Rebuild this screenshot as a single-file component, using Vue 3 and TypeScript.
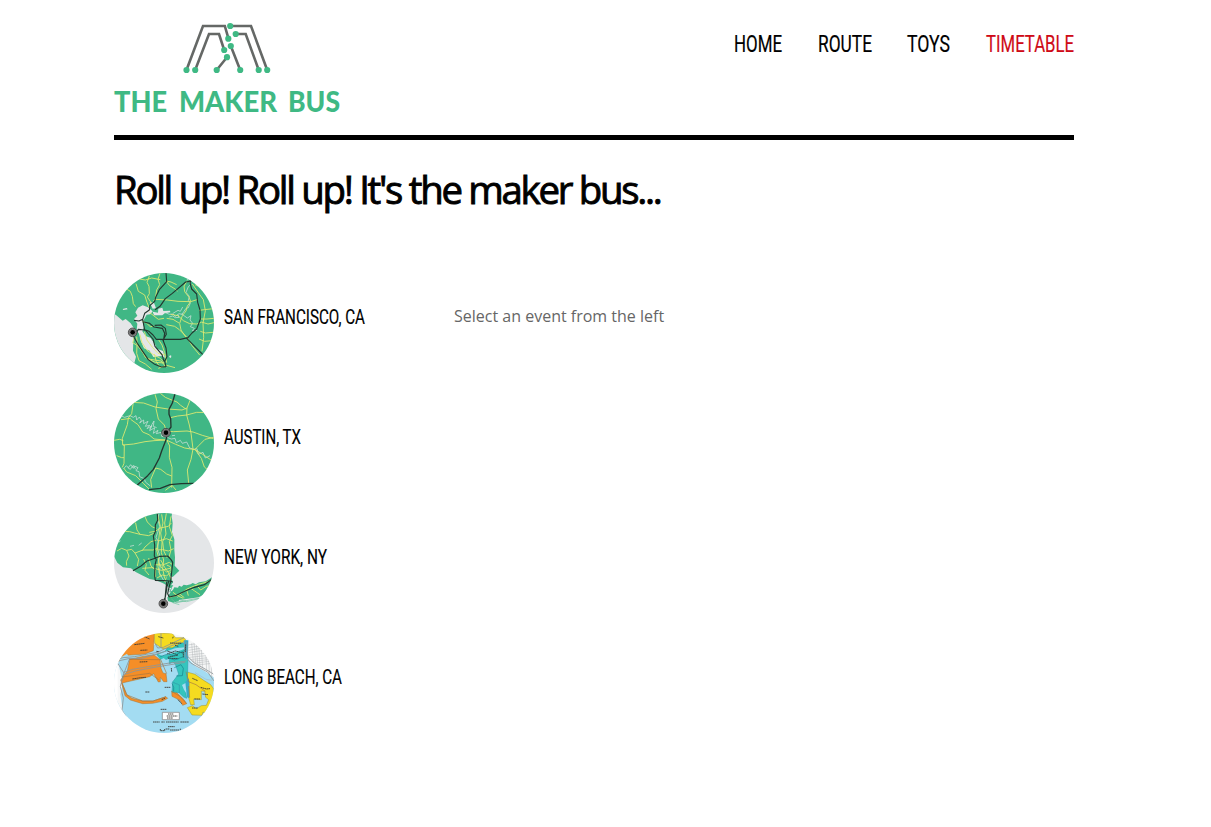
<script setup lang="ts">
interface Shape { c: string; d: string }
interface Label { text: string; width: number; gap?: number; active?: boolean }
interface Stop { id: string; label: Label; shapes: Shape[]; pin?: [number, number] }

const nav: Label[] = [
  { text: 'HOME', width: 48, gap: 36 },
  { text: 'ROUTE', width: 54, gap: 35 },
  { text: 'TOYS', width: 43, gap: 36 },
  { text: 'TIMETABLE', width: 88, active: true },
]

const dots = [
  [126.2, 16], [124.3, 28.7], [131.7, 24], [126.8, 36], [120.2, 40], [123, 47.2],
  [82.5, 60], [91.2, 60], [112.7, 60], [136.2, 60], [154.7, 60], [163.2, 60],
]

const stops: Stop[] = [
  {
    id: 'sf', label: { text: 'SAN FRANCISCO, CA', width: 141 }, pin: [68, 193],
    shapes: [
      { c: 'land', d: 'M0 0H324V330H0Z' },
      { c: 'water', d: 'M0 132L18 141L38 158L47 153L62 166L72 181L70 216L69 248L78 266L73 285L82 305L96 325H0Z' },
      { c: 'water', d: 'M72 153L82 143L76 133L84 119L98 112L114 118L128 130L121 139L110 140L104 151L98 163L102 178L97 190L108 205L121 209L137 232L140 242L159 249L165 269L154 264L130 267L119 248L102 241L92 218L87 197L80 187L82 167Z' },
      { c: 'water', d: 'M119 103L132 104L138 121L128 122ZM128 131L144 134L145 122L157 119L160 129L180 128L181 133L164 136L157 142L132 142ZM38 123L50 120L53 124L40 126ZM180 262L184 263L183 270L177 267Z' },
      { c: 'thinwater', d: 'M164 133L178 139L189 138L196 145L207 137L216 139L228 121L235 119L241 105L235 98L238 85L228 73L235 56L242 50L238 40L246 30M204 140L207 148L196 149L188 144L178 147M215 138L232 150L243 143L240 156L248 166L241 176L253 181L247 188L261 187M189 136L204 127L211 130L218 117M230 36L244 28L248 39' },
      { c: 'road', d: 'M48 62L61 70L67 85L70 107L77 116M78 47L85 70L104 81L111 103L117 118M118 24L111 43L117 55L118 77L112 87L126 108M150 16L144 34L149 50L140 66L136 93L130 98M168 39L179 53L197 64L202 70M136 94L172 96L204 100L242 101L264 94M88 33L106 36L125 30L151 35M168 39L183 42L200 50M232 38L222 54L224 71L238 89L242 101L232 114L228 129L217 143L209 166L213 186L228 208M247 48L265 74L280 95L286 128L279 165L281 208L276 250M255 50L271 57L283 73L306 91M267 127L284 125L310 122M273 153L291 153L312 151M274 162L294 168L312 164M271 190L286 195L309 193M267 213L284 220L306 218M182 139L204 143L220 158L239 167L260 168L274 163M170 151L189 154L207 165M169 170L194 175L208 185L231 208L246 233L269 261M118 133L145 154L162 151M96 160L109 165L121 176L133 174M74 205L68 224L81 232L80 256L87 278L106 288L125 304M80 206L82 232L97 252L112 272L136 283L163 285M90 200L96 224L111 247L132 261L151 271L164 286M103 191L111 216L128 239L144 256L166 261M145 214L156 231L164 254L170 284M133 258L139 281L151 299M78 224L94 244L106 268L121 274L153 279L169 298M145 301L170 292L195 299' },
      { c: 'highway', d: 'M168 14L170 41L148 65L137 88L134 100L120 112L118 126L104 136L98 154L87 159L72 157M247 31L238 40L227 42L187 76L166 92L150 115L135 125M247 31L240 44L245 63L260 78L263 103L270 126L271 153L260 183L246 195L234 209L211 214L139 214L129 201L117 190L104 185M98 154L102 175L104 188M102 162L119 166L132 177L157 181L164 196L160 219L168 240L171 266L164 280L168 296L154 297L134 289L115 275L98 250L82 226L73 209L71 197M103 183L129 213L135 235L156 260L162 280M77 197L85 184L103 186M134 172L153 171L166 181L169 199L158 218M228 209L278 259' },
    ],
  },
  {
    id: 'austin', label: { text: 'AUSTIN, TX', width: 77 }, pin: [168, 134],
    shapes: [
      { c: 'land', d: 'M0 0H324V330H0Z' },
      { c: 'thinwater', d: 'M32 83L44 88L60 83L70 88L78 83L80 96L88 87L94 97L89 105L101 96L101 107L114 100L106 115L119 112L111 122L126 113L119 128L134 119L130 136L144 127L139 137L153 133L155 145L171 148L184 153L195 151L199 164L211 157L217 166L230 162L239 180L252 184L261 182L265 199L279 193L286 210L300 203M119 124L126 109L132 99L130 115L140 119M186 143L195 142M41 242L49 233L55 239L62 230L70 241L73 234L84 239L78 248L87 251L89 266L103 272L106 282L121 294M53 239L61 244L70 232L77 244' },
      { c: 'road', d: 'M70 43L65 77L55 90L52 110L37 151L38 171L43 171L42 226L37 238M62 91L33 95M62 94L84 110L98 132L117 140L132 153L165 156M67 43L101 45L135 57L174 63L216 66L231 60L240 37L234 24M231 60L230 81L238 111L243 135L249 183L243 214L232 246L236 285M135 19L142 42L138 62L145 93L163 111L170 132M151 16L166 28L180 34L201 42L212 52L229 64M181 89L203 84L230 81L260 73L298 74M174 130L190 131L231 129L249 132L277 142L311 152M39 171L71 168L105 161L132 158L169 156L197 169L224 180L255 185L278 199L306 218M312 148L285 154L267 172L255 184M12 157L29 154L40 158M170 155L179 174L178 208L186 238L185 299M137 240L122 275L125 299M137 240L152 244L170 258L185 264M255 184L274 211L283 237L294 246M41 240L50 252L77 263L101 287L119 305M166 307L186 292L198 306M20 203L35 209L42 209' },
      { c: 'highway wide', d: 'M196 14L187 45L177 64L177 79L182 92L183 117L172 132L169 153L155 189L148 210L130 244L113 263L82 291M117 305L151 301L180 290L214 287L252 286' },
    ],
  },
  {
    id: 'ny', label: { text: 'NEW YORK, NY', width: 103 }, pin: [160, 287],
    shapes: [
      { c: 'water', d: 'M0 0H324V330H0Z' },
      { c: 'land', d: 'M0 0H188L185 25L188 46L186 72L193 94L193 125L195 148L194 173L208 188L188 207L181 204L189 223L183 232L190 232L177 251L185 249L174 264L174 275L192 268L203 268L206 276L229 273L266 268L290 255L303 239L324 231V202L306 208L287 220L267 223L257 229L248 225L242 229L230 232L221 230L215 236L207 233L204 239L193 238L189 245L179 255L186 240L178 239L165 229L156 224L138 217L119 213L99 203L77 192L63 181L39 178L22 164L12 145V0Z' },
      { c: 'land', d: 'M172 268L192 262L208 272L206 279L190 284L174 279Z' },
      { c: 'thinwater', d: 'M147 17L143 34L149 55L142 77L138 88L145 101L143 123L149 142L147 159L150 178L147 193L161 217L172 226M60 115L72 112M39 58L36 75M95 105L86 112M26 104L31 98' },
      { c: 'coast', d: 'M184 273L198 284L221 280L250 273L284 270L309 250M198 282L228 279M188 284L208 290M208 275L230 281L266 272M168 255L174 242L182 246' },
      { c: 'road', d: 'M59 37L77 45L81 66L90 79L116 83L131 76M20 78L35 70L59 71L74 75L90 79M104 24L112 42L127 57L139 61M21 129L35 121L50 127L65 124L75 135L99 126L129 126L145 120M50 127L57 144L49 161L50 173M97 128L105 117L123 101L140 96M75 135L86 154L82 174M142 17L151 55L146 95L140 127L146 149L144 176L151 205M155 19L159 45L152 75L156 104L154 134L161 156L158 181L164 212M169 16L164 45L168 78L158 101L161 128L171 149M183 25L178 56L187 82L178 101L183 126L177 147M118 73L136 70L151 60L175 55L184 45M145 99L169 92L188 99M140 126L158 125L175 129L191 122M101 153L109 170L105 187L117 201M116 150L123 174L136 186L136 207M133 170L158 171L178 163L187 170M97 181L126 179L154 187L180 181M146 164L155 180L170 192L181 188M141 210L157 201L170 204L184 190L181 176L170 171M152 156L164 178L175 193L184 215M169 208L164 222M178 268L207 261L231 243L265 229L306 218M189 253L204 264L220 271M209 258L223 269M241 240L254 249L270 260M260 232L272 246L289 235L306 232M230 245L235 263' },
      { c: 'highway', d: 'M142 17L143 37L136 51L136 71L130 84L134 111L133 144L139 155L135 171L134 204L136 217L161 218L180 219L188 222M69 188L93 174L111 159L131 152L150 145L173 144L183 155L188 163L185 192L182 219M176 220L171 236L166 267L160 282M182 220L177 238L173 257L178 267L199 262L224 250L253 238L283 230L308 212M170 222L167 250L165 275' },
    ],
  },
  {
    id: 'lb', label: { text: 'LONG BEACH, CA', width: 118 },
    shapes: [
      { c: 'paper', d: 'M0 0H324V330H0Z' },
      { c: 'sea', d: 'M17 95L43 75L93 77L122 61L144 40L229 38L235 92L258 116L282 128L324 157V330H0V60Z' },
      { c: 'paper', d: 'M0 104H25L38 165L31 199L38 249L47 268L49 289L28 281L0 258Z' },
      { c: 'orange', d: 'M43 55L86 14L134 10L130 68L105 78L49 82L25 101L17 91ZM32 156L52 129L59 94L95 86L131 80L150 95L153 121L159 135L168 137L171 161L161 161L151 148L151 161L145 162L131 137L119 146L36 165L50 200L66 211L98 219L129 219L168 206L173 211L157 220L128 226L98 227L61 216L45 203Z' },
      { c: 'orange', d: 'M185 190L196 190L222 215L230 227L218 232L210 217L186 205Z' },
      { c: 'yellow', d: 'M133 16H186L197 29H222L229 38L185 61L158 62L134 46Z' },
      { c: 'yellow', d: 'M228 131L255 139L281 157L302 170L310 181L311 226L301 239L307 254L291 259L279 252L276 262L246 261L232 239L247 233L259 242L274 233L289 232L296 215L287 208L284 190L274 189V215L251 213L253 230L242 230L236 209L238 164Z' },
      { c: 'teal', d: 'M140 79L164 71L173 59L187 60L214 45L229 46L234 87L232 162L226 185L230 211L221 207L208 195L208 171L187 163L206 138L196 109L189 102L178 107L178 91L155 99Z' },
      { c: 'teal', d: 'M188 163L208 171V194L186 192Z' },
      { c: 'sea', d: 'M145 79L195 61L225 58L221 64L183 77L157 84ZM183 105L191 109L192 144L185 151L180 130ZM216 171L232 162L229 196L222 185ZM21 95L51 77L57 88L42 101ZM150 96L161 90L169 97L167 108Z' },
      { c: 'bluezone', d: 'M222 37H235L234 93L224 92ZM226 163L237 151L238 211L231 208Z' },
      { c: 'mapgrey', d: 'M21 94L39 89L74 86L109 79L143 73L175 57L213 42M24 99L60 91L91 92L131 81L169 69M41 133L68 124L130 113L179 105L229 99M44 139L76 129L133 118L225 103M16 95L42 135L37 157M58 94L39 143L31 176L40 210L36 247L49 267M222 38L226 86L242 105L264 117L293 132L312 159M230 41L233 85L253 105L287 124L312 139M135 46L143 60L160 58L222 29M153 16V58' },
      { c: 'streets', d: 'M234 51L263 46M235 59L278 53M235 67L287 58M236 74L292 65M237 81L303 74M238 88L308 81M240 95L312 87M247 100L313 93M252 106L313 98M261 111L314 105M245 46L250 103M252 40L257 107M259 38L263 111M266 46L270 117M273 49L278 121M287 59L290 130M295 68L298 137M303 75L305 151M255 134L288 154L307 157' },
      { c: 'details', d: 'M73 50L104 46M91 67L112 66M89 102L112 101M67 153L92 149L108 148M106 192H119M145 26L160 30M188 31L190 25M180 45L214 46M174 91L205 92M184 120L185 132M220 72V88M155 215L166 210M204 215L215 227M152 244H169M164 178H182M247 151L263 158M272 178L289 183L300 182M253 213H270M246 240L264 240M277 198L294 200M139 70L147 71M101 25L119 33M227 49L226 73M195 52L205 55M172 69L204 81L173 88M171 78L196 69L219 75' },
      { c: 'darkteal', d: 'M193 119L213 110L220 121L217 143L199 144M151 86L173 78L192 83L225 67M172 88L193 96L221 86M186 166L191 178V190' },
      { c: 'legend', d: 'M157 253H208V275H157Z' },
      { c: 'details', d: 'M174 258H190M170 264H202M171 270H188M129 282H149M154 282H164M168 282H206M211 282H237M174 296H194M151 303V308H164V303M167 303H179M180 306H207M211 302V307' },
      { c: 'outline', d: 'M36 147L119 136L146 155M36 165L51 201L98 219L129 219L168 206M57 94L152 95L170 137M185 190L210 205L230 227M236 174L239 209M228 131L235 161L258 170L286 190' },
      { c: 'fade', d: 'M0 90H23V240H0Z' },
    ],
  },
]
</script>

<template>
  <div class="page">
    <header class="masthead">
      <svg class="logo" width="226" height="100" viewBox="10 10 226 100" aria-label="The Maker Bus">
        <g class="tracks">
          <path d="M82.5 60L99 16H120.8L124.5 28.7M91.2 60L105 24H115L120.2 40M126 16H147L163.2 60M131.7 24H141.7L154.7 60M126.8 36L136.2 60M123 47.2L112.7 60" />
        </g>
        <circle v-for="(dot, i) in dots" :key="i" class="dot" :cx="dot[0]" :cy="dot[1]" r="3.1" />
        <text x="10" y="102" textLength="53" lengthAdjust="spacingAndGlyphs">THE</text>
        <text x="75" y="102" textLength="98" lengthAdjust="spacingAndGlyphs">MAKER</text>
        <text x="184" y="102" textLength="52" lengthAdjust="spacingAndGlyphs">BUS</text>
      </svg>
      <nav>
        <a v-for="item in nav" :key="item.text" :class="{ active: item.active }" :style="{ marginRight: (item.gap || 0) + 'px' }">
          <svg :width="item.width" height="30">
            <text x="0" y="21.7" :textLength="item.width" lengthAdjust="spacingAndGlyphs">{{ item.text }}</text>
          </svg>
        </a>
      </nav>
    </header>
    <h1>Roll up! Roll up! It's the maker bus...</h1>
    <main>
      <ul>
        <li v-for="stop in stops" :key="stop.id">
          <svg class="map" viewBox="12 15 300 300">
            <defs>
              <clipPath :id="'clip-' + stop.id"><circle cx="162" cy="165" r="150" /></clipPath>
            </defs>
            <g :clip-path="`url(#clip-${stop.id})`">
              <path v-for="(s, i) in stop.shapes" :key="i" :class="s.c" :d="s.d" />
            </g>
            <g v-if="stop.pin" :transform="`translate(${stop.pin[0]} ${stop.pin[1]})`">
              <circle class="halo" r="13" />
              <circle class="ring" r="9.5" />
              <circle r="7" />
            </g>
          </svg>
          <svg class="place" :width="stop.label.width" height="24">
            <text x="0" y="17.8" :textLength="stop.label.width" lengthAdjust="spacingAndGlyphs">{{ stop.label.text }}</text>
          </svg>
        </li>
      </ul>
      <p>Select an event from the left</p>
    </main>
  </div>
</template>

<style>
body { margin: 0; background: #fff; }
</style>

<style scoped>
.page { width: 960px; margin-left: 114px; font-family: "Open Sans", sans-serif; color: #000; }
.masthead { display: flex; justify-content: space-between; height: 115px; padding-top: 20px; border-bottom: 5px solid #000; }
svg { display: block; overflow: visible; }
.logo text { font: 900 27.5px Lato, sans-serif; fill: #3fb984; }
.tracks path { fill: none; stroke: #656866; stroke-width: 2.6; }
.dot { fill: #3fb984; }
nav { display: flex; padding-top: 10px; }
nav text { font: 400 24.5px Roboto, sans-serif; stroke: #000; stroke-width: 0.2; }
.active text { fill: #cf0a16; stroke: #cf0a16; }
h1 { margin: 21px 0 0; font-size: 38.4px; line-height: 56px; font-weight: 400; letter-spacing: -2.3px; white-space: nowrap; -webkit-text-stroke: 0.9px #000; }
main { display: grid; grid-template-columns: 340px 1fr; margin-top: 56px; }
ul { list-style: none; margin: 0; padding: 0; display: grid; gap: 20px; }
li { display: flex; height: 100px; }
.map { width: 100px; height: 100px; overflow: hidden; }
.place { margin: 33px 0 0 10px; }
.place text { font: 400 20px Roboto, sans-serif; stroke: #000; stroke-width: 0.15; }
p { margin: 31px 0 0; font-size: 16px; line-height: 24px; color: #666; }
.land { fill: #40b785; }
.water { fill: #e4e6e8; }
.paper { fill: #f6f7f7; }
.fade { fill: #fff; }
.sea { fill: #a3dcf2; }
.orange { fill: #f58e27; stroke: #a77737; stroke-width: 1.5; }
.yellow { fill: #f5db20; stroke: #9f922d; stroke-width: 1.5; }
.teal { fill: #35c5bd; stroke: #2799a4; stroke-width: 1.5; }
.bluezone { fill: #36aac7; }
.thinwater, .coast, .road, .highway, .mapgrey, .streets, .details, .darkteal, .outline { fill: none; stroke-linejoin: round; }
.thinwater { stroke: #cfe2dc; stroke-width: 2.2; }
.coast { stroke: #6cc49f; stroke-width: 2; }
.road { stroke: #e2ea70; stroke-width: 2.6; }
.highway { stroke: #23372f; stroke-width: 3.4; }
.wide { stroke-width: 4; }
.mapgrey { stroke: #8f9698; stroke-width: 2.6; }
.streets { stroke: #a9adb0; stroke-width: 1.3; }
.details { stroke: #3b3a35; stroke-width: 2.7; stroke-dasharray: 5 1; }
.darkteal { stroke: #187e8b; stroke-width: 2; }
.outline { stroke: #a67742; stroke-width: 2; }
.legend { fill: #fff; stroke: #777; stroke-width: 2; }
.halo { fill: #999; stroke: #222; stroke-width: 2; }
.ring { fill: none; stroke: #333; stroke-width: 1.2; }
</style>
